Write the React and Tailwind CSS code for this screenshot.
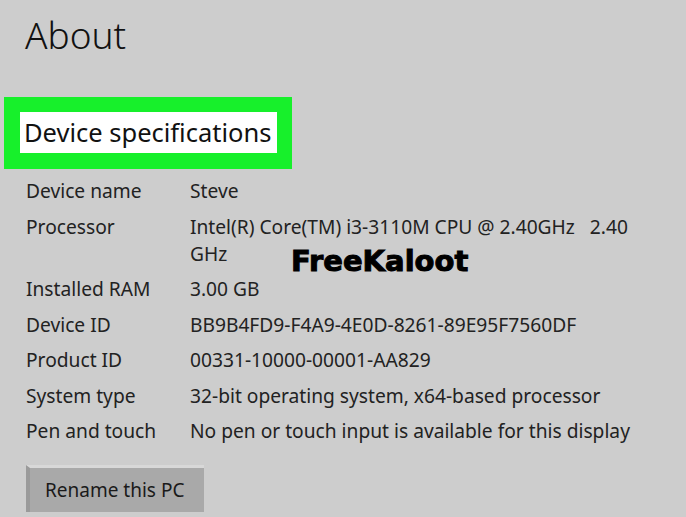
const specs = [
  ['Device name', 'Steve'],
  ['Processor', 'Intel(R) Core(TM) i3-3110M CPU @ 2.40GHz\u00a0\u00a0 2.40 GHz'],
  ['Installed RAM', '3.00 GB'],
  ['Device ID', 'BB9B4FD9-F4A9-4E0D-8261-89E95F7560DF'],
  ['Product ID', '00331-10000-00001-AA829'],
  ['System type', '32-bit operating system, x64-based processor'],
  ['Pen and touch', 'No pen or touch input is available for this display'],
];

export default function App() {
  return (
    <div
      className="relative w-[686px] h-[517px] overflow-hidden bg-[#cdcdcd] text-[#1a1a1a]"
      style={{ fontFamily: '"Noto Sans", "Open Sans", sans-serif' }}
    >
      {/* Page title */}
      <h1 className="pl-[25px] pt-[12px] text-[37px] leading-[46px] font-light text-[#111]">About</h1>

      {/* Highlighted section heading */}
      <div className="mt-[39px] ml-[4px] w-[288px] bg-[#17f02b] pt-[15px] pb-[16px] pl-[16px] pr-[15px]">
        <div className="bg-white h-[41px] flex items-center px-[4px]">
          <h2 className="text-[25.5px] leading-none text-[#111]">Device specifications</h2>
        </div>
      </div>

      {/* Specs list */}
      <div className="mt-[8px] ml-[26px] grid grid-cols-[164px_1fr] gap-y-[8.5px] text-[19.2px] leading-[27px] text-[#222] pr-[40px]">
        {specs.map(([label, value]) => (
          <div key={label} className="contents">
            <div>{label}</div>
            <div>{value}</div>
          </div>
        ))}
      </div>

      <button className="mt-[21px] ml-[26px] w-[178px] h-[47px] bg-[#a9a9a9] border-t-[3px] border-t-[#d8d8d8] border-l-[4px] border-l-[#9a9a9a] text-left pl-[15px] text-[19px] text-[#1a1a1a]">
        Rename this PC
      </button>

      {/* Watermark */}
      <div
        className="absolute left-[291px] top-[246px] text-[29px] font-bold text-black leading-[30px] [-webkit-text-stroke:1px_black]"
        style={{ fontFamily: '"DejaVu Sans", sans-serif' }}
      >
        FreeKaloot
      </div>
    </div>
  );
}
